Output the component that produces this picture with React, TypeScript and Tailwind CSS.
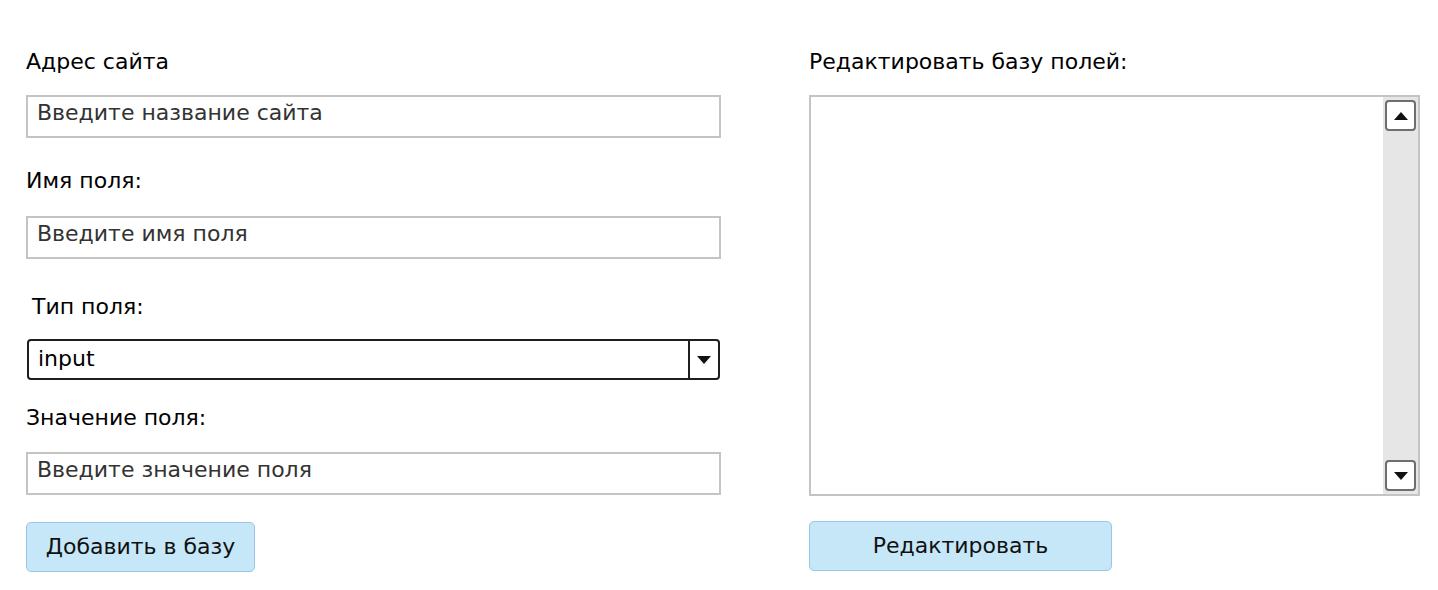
import React from "react";

const font = { fontFamily: '"DejaVu Sans", Verdana, sans-serif' };

const Field = ({ placeholder }: { placeholder: string }) => (
  <input
    type="text"
    placeholder={placeholder}
    className="box-border h-[43px] w-[695px] border-2 border-[#c4c4c4] bg-white pb-[9px] pl-[9px] pt-0 text-[22px] text-[#333] outline-none placeholder:text-[#333]"
  />
);

const TriangleDown = () => (
  <svg width="14" height="8" viewBox="0 0 14 8">
    <path d="M0 0 H14 L7 8 Z" fill="#111" />
  </svg>
);

const TriangleUp = () => (
  <svg width="14" height="8" viewBox="0 0 14 8">
    <path d="M0 8 H14 L7 0 Z" fill="#111" />
  </svg>
);

export default function App() {
  return (
    <div className="flex min-h-[590px] w-[1438px] bg-white pl-[26px] pt-[47px] text-[22px] text-black" style={font}>
      {/* left column */}
      <div className="flex w-[695px] flex-col">
        <div className="h-[30px] leading-[30px]">Адрес сайта</div>
        <div className="mt-[18px]">
          <Field placeholder="Введите название сайта" />
        </div>

        <div className="mt-[28px] h-[30px] leading-[30px]">Имя поля:</div>
        <div className="mt-[20px]">
          <Field placeholder="Введите имя поля" />
        </div>

        <div className="mt-[33px] h-[30px] pl-[6px] leading-[30px]">Тип поля:</div>
        <div className="ml-[1px] mt-[17px] flex h-[41px] w-[693px] items-stretch rounded-[4px] border-2 border-[#1e1e1e] bg-white">
          <div className="flex flex-1 items-center pb-[2px] pl-[9px]">input</div>
          <div className="flex w-[30px] items-center justify-center border-l-2 border-[#1e1e1e]">
            <TriangleDown />
          </div>
        </div>

        <div className="mt-[23px] h-[30px] leading-[30px]">Значение поля:</div>
        <div className="mt-[19px]">
          <Field placeholder="Введите значение поля" />
        </div>

        <button className="mt-[27px] flex h-[50px] w-[229px] items-center justify-center rounded-[5px] border border-[#97c9e3] bg-[#c6e7f8] pb-[2px] text-[22px] text-[#111]">
          Добавить в базу
        </button>
      </div>

      {/* right column */}
      <div className="ml-[88px] flex w-[611px] flex-col">
        <div className="h-[30px] leading-[30px]">Редактировать базу полей:</div>
        <div className="mt-[18px] flex h-[401px] w-[611px] border-2 border-[#c4c4c4] bg-white">
          <div className="flex-1" />
          <div className="flex w-[35px] flex-col items-center justify-between bg-[#e6e6e6] px-[2px] py-[3px]">
            <div className="flex h-[31px] w-[31px] items-center justify-center rounded-[4px] border-2 border-[#6e6e6e] bg-white">
              <TriangleUp />
            </div>
            <div className="flex h-[31px] w-[31px] items-center justify-center rounded-[4px] border-2 border-[#6e6e6e] bg-white">
              <TriangleDown />
            </div>
          </div>
        </div>
        <button className="mt-[25px] flex h-[50px] w-[303px] items-center justify-center rounded-[5px] border border-[#97c9e3] bg-[#c6e7f8] pb-[2px] text-[22px] text-[#111]">
          Редактировать
        </button>
      </div>
    </div>
  );
}
